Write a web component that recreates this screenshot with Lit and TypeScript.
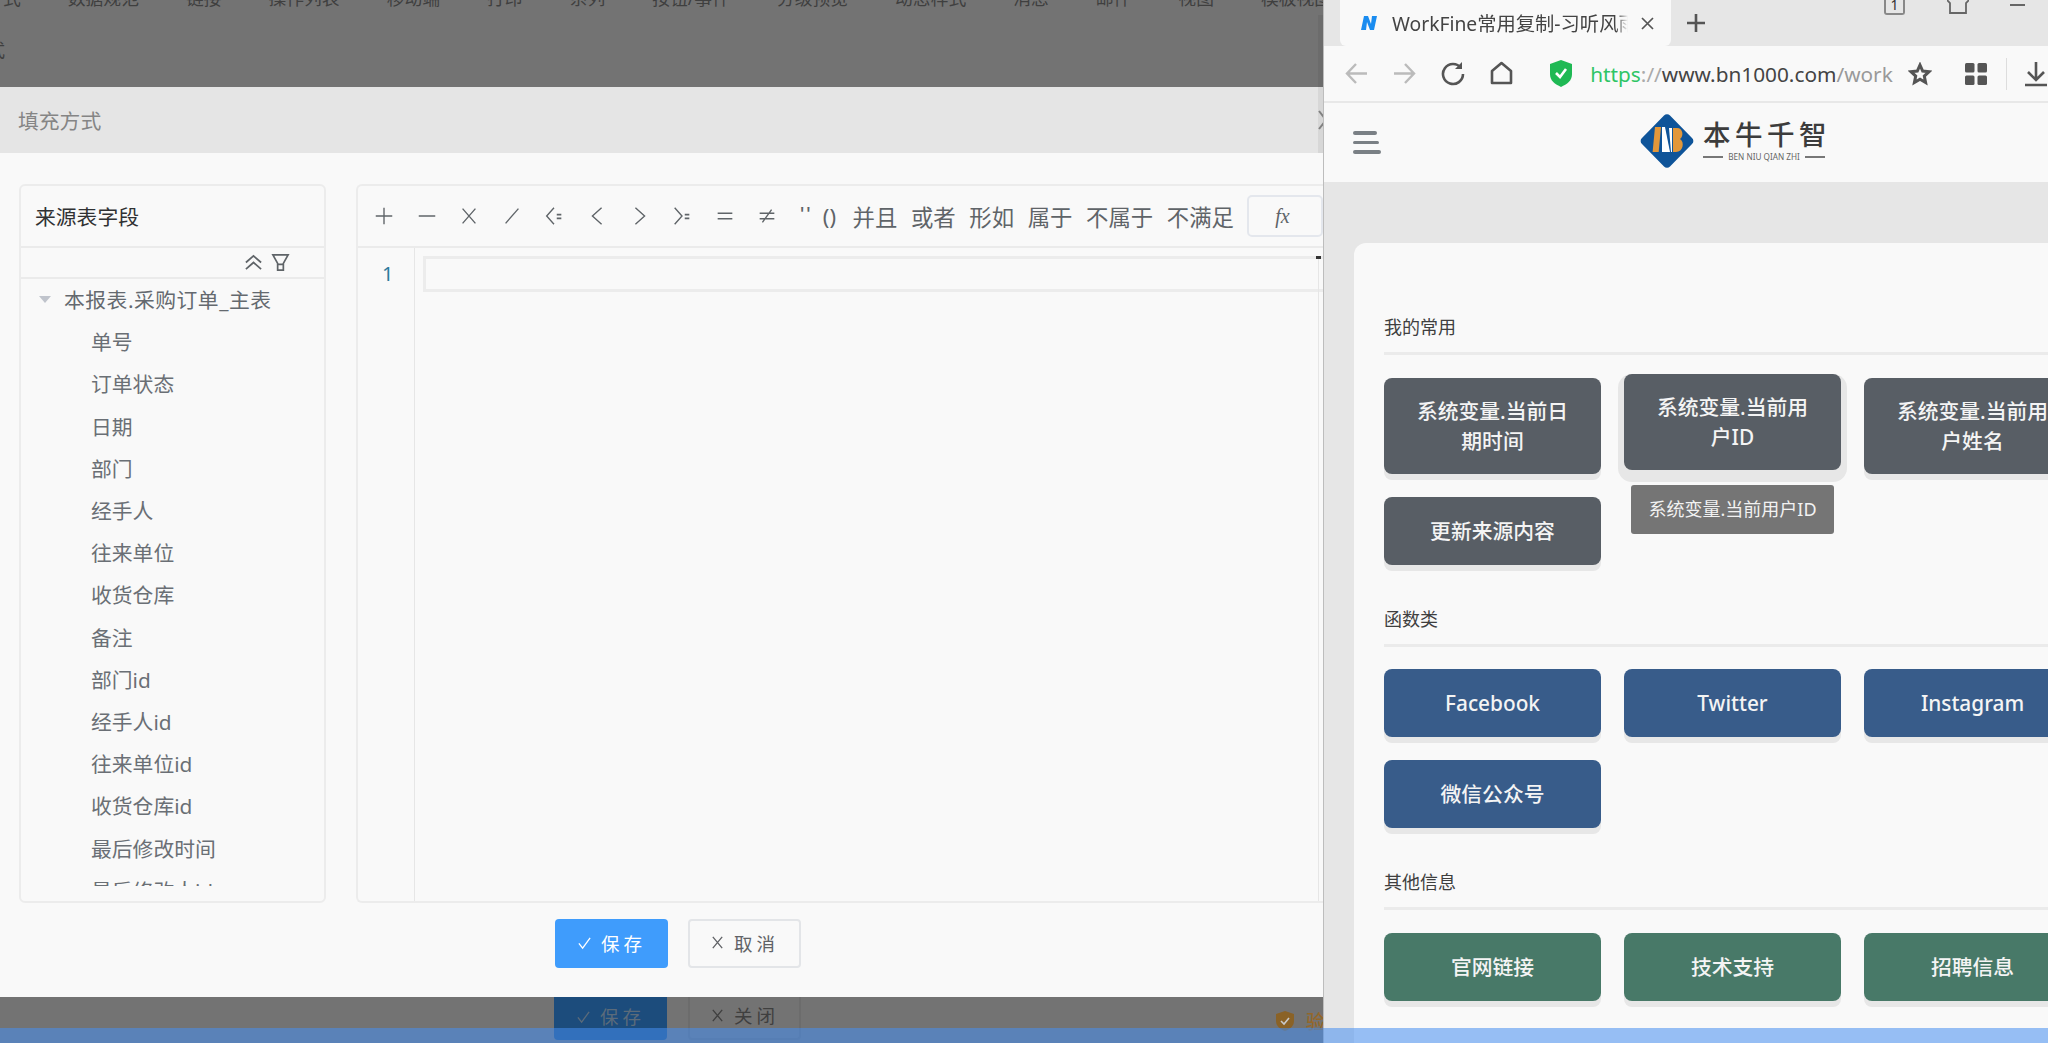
import { LitElement, html, css, svg } from "lit";
import { customElement } from "lit/decorators.js";

const BACK_TABS = ["式", "数据规范", "链接", "操作列表", "移动端", "打印", "系列", "按钮/事件", "分级预览", "动态样式", "消息", "邮件", "视图", "模板视图"];
const FIELDS = ["单号", "订单状态", "日期", "部门", "经手人", "往来单位", "收货仓库", "备注", "部门id", "经手人id", "往来单位id", "收货仓库id", "最后修改时间", "最后修改人id"];
const OPS = ["+", "−", "×", "/", "<=", "<", ">", ">=", "=", "≠"];
const WORD_OPS = ["并且", "或者", "形如", "属于", "不属于", "不满足"];

const opIcon = (op: string) => {
  const l = (d: string) => svg`<path d=${d}></path>`;
  const small = svg`<path d="M15 10.500h5M15 14.500h5" stroke-width="2"></path>`;
  const shapes: Record<string, unknown> = {
    "+": l("M3 12h18M12 3v18"),
    "−": l("M3 12h18"),
    "×": l("M5 4l14 16M19 4L5 20"),
    "/": l("M5 20L19 4"),
    "<=": svg`${l("M12 3L4 12l8 9")}${small}`,
    "<": l("M17 3L7 12l10 9"),
    ">": l("M7 3l10 9-10 9"),
    ">=": svg`${l("M4 3l8 9-8 9")}${small}`,
    "=": l("M4 9h16M4 15h16"),
    "≠": l("M4 9h16M4 15h16M17 5L7 19"),
  };
  return html`<svg class="op" viewBox="0 0 24 24">${shapes[op]}</svg>`;
};

@customElement("app-root")
export class AppRoot extends LitElement {
  static styles = css`
    :host {
      display: block;
      position: relative;
      width: 2048px;
      height: 1043px;
      overflow: hidden;
      font-family: "Noto Sans", "Noto Sans CJK SC", sans-serif;
      background: #f9f9f9;
    }
    * { box-sizing: border-box; }
    .screen { display: flex; height: 1043px; }

    /* left window behind the browser */
    .left { width: 1323px; flex: none; display: flex; flex-direction: column; overflow: hidden; background: #737373; position: relative; }
    .scroll-strip { position: absolute; right: 0; top: 15px; width: 5px; height: 138px; background: rgba(0, 0, 0, 0.06); }
    .backdrop { height: 87px; flex: none; position: relative; overflow: hidden; }
    .back-tabs { display: flex; gap: 47px; margin: -14px 0 0 3px; font-size: 17.8px; line-height: 24px; color: #3f3f3f; white-space: nowrap; }
    .stray { position: absolute; left: -13px; top: 36px; font-size: 18px; color: #3f3f3f; }
    .modal { flex: none; height: 910px; display: flex; flex-direction: column; background: #f9f9f9; }
    .modal-head { height: 66px; flex: none; display: flex; align-items: center; justify-content: space-between; padding: 0 0 0 18px; background: #e5e5e5; font-size: 20.8px; color: #858585; overflow: hidden; }
    .modal-close { width: 16px; height: 24px; margin-right: -11px; fill: none; stroke: #8a8a8a; stroke-width: 2; }
    .modal-body { display: grid; grid-template-columns: 307px 1fr; gap: 30px; padding: 31px 0 0 19px; height: 750px; }
    .panel { border: 2px solid #ececec; border-radius: 6px; height: 719px; overflow: hidden; }
    .fields { display: flex; flex-direction: column; }
    .fields-title { height: 62px; flex: none; display: flex; align-items: center; padding-left: 14px; font-size: 20.8px; color: #303133; border-bottom: 2px solid #ebebeb; }
    .fields-tools { height: 31px; flex: none; display: flex; justify-content: flex-end; align-items: center; gap: 8px; padding-right: 34px; border-bottom: 2px solid #ebebeb; }
    .fields-tools svg { width: 19px; height: 19px; fill: none; stroke: #5f6468; stroke-width: 1.8; }
    .tree { height: 607px; overflow: hidden; color: #6a6f75; font-size: 20.8px; }
    .tree-root { height: 42.2px; margin-top: -1px; display: flex; align-items: center; padding-left: 18px; letter-spacing: 0.5px; color: #64696f; }
    .caret { width: 0; height: 0; margin-right: 13px; border-left: 6px solid transparent; border-right: 6px solid transparent; border-top: 7px solid #c0c4cc; }
    .tree-item { height: 42.2px; display: flex; align-items: center; padding-left: 70px; }

    .editor { display: flex; flex-direction: column; border-right: none; border-radius: 6px 0 0 6px; }
    .toolbar { height: 62px; flex: none; display: flex; align-items: center; padding-left: 15px; border-bottom: 2px solid #ebebeb; white-space: nowrap; color: #5f6468; font-size: 22.4px; }
    .op { width: 22px; height: 22px; margin-right: 20.6px; flex: none; fill: none; stroke: #5f6468; stroke-width: 1.5; }
    .quote { margin: -2px 0 0 1px; width: 16px; font-family: "Liberation Sans", sans-serif; letter-spacing: 2px; }
    .paren { width: 20px; margin-left: 10px; font-size: 22px; }
    .word { margin-left: 13.6px; }
    .fx { width: 76px; height: 42px; margin-left: 13px; padding-right: 5px; flex: none; border: 2px solid #e4e7ed; border-radius: 5px; display: flex; align-items: center; justify-content: center; font: italic 20px "Liberation Serif", serif; color: #5f6468; }
    .code { flex: 1; display: flex; }
    .gutter { width: 57px; flex: none; border-right: 1px solid #e6e6e6; padding: 11px 0 0 24px; font-size: 20px; line-height: 30px; color: #2b7a9c; }
    .code-line { flex: 1; padding: 8px 0 0 8px; position: relative; }
    .active-line { height: 36px; border: 3px solid #ececec; border-right: none; }
    .cursor { position: absolute; right: 2px; top: 8px; width: 5px; height: 3px; background: #333; }
    .cursor-rule { position: absolute; right: 4px; top: 8px; bottom: 0; width: 1px; background: #e6e6e6; }
    .modal-foot { display: flex; gap: 20px; padding: 16px 0 0 555px; }
    .btn { width: 113px; height: 49px; padding-bottom: 2px; display: flex; align-items: center; justify-content: center; gap: 9px; border-radius: 4px; font-size: 18.5px; letter-spacing: 4px; }
    .btn svg { width: 15px; height: 15px; fill: none; stroke: currentColor; stroke-width: 1.4; }
    .primary { background: #3f9cfc; color: #fff; }
    .plain { border: 2px solid #e3e5e8; color: #606266; }

    .behind { flex: 1; display: flex; gap: 21px; padding-left: 554px; position: relative; }
    .behind .btn { height: 43px; padding-bottom: 5px; border-radius: 0 0 4px 4px; }
    .behind .primary { background: #1c4c7c; color: #5b6b7a; }
    .behind .plain { border: 2px solid #6c6c6c; border-top: none; color: #3f3f3f; }
    .verify { position: absolute; left: 1276px; top: 10px; display: flex; align-items: center; gap: 12px; color: #94672a; font-size: 19px; font-weight: 500; white-space: nowrap; }
    .verify svg { width: 18px; height: 20px; flex: none; }

    /* browser */
    .browser { flex: 1; min-width: 0; display: flex; flex-direction: column; border-left: 1px solid #bdbdbd; overflow: hidden; background: #e6e6e6; }
    .tabs { height: 46px; flex: none; display: flex; align-items: flex-end; padding-left: 16px; background: #e6e6e6; position: relative; }
    .tab { width: 331px; height: 46px; flex: none; display: flex; align-items: center; padding-left: 21px; background: #f9f9f9; border-radius: 0 0 6px 6px; font-size: 19.3px; color: #444; white-space: nowrap; }
    .tab svg.fav { width: 17px; height: 16px; margin-right: 14px; flex: none; }
    .tab-name { width: 236px; overflow: hidden; -webkit-mask-image: linear-gradient(90deg, #000 95%, transparent); mask-image: linear-gradient(90deg, #000 95%, transparent); }
    .tab-x { width: 15px; height: 15px; margin-left: 12px; fill: none; stroke: #555; stroke-width: 1.7; }
    .tab-add { width: 20px; height: 20px; margin: 0 0 13px 15px; fill: none; stroke: #555; stroke-width: 2.6; }
    .win { position: absolute; top: 0; height: 20px; }
    .win-count { left: 560px; width: 21px; height: 16px; top: -1px; border: 2px solid #888; border-top: none; border-radius: 0 0 3px 3px; font-size: 14px; line-height: 11px; text-align: center; color: #333; }
    .win-shirt { left: 623px; width: 22px; height: 14px; fill: none; stroke: #666; stroke-width: 1.8; }
    .win-min { left: 686px; top: 4px; width: 15px; height: 2px; background: #666; }
    .address { height: 57px; flex: none; display: flex; align-items: center; background: #f9f9f9; border-bottom: 2px solid #e8e8e8; padding-left: 20px; position: relative; }
    .address svg { flex: none; }
    .nav { width: 25px; height: 25px; margin-right: 23.3px; fill: none; stroke-width: 2.6; stroke: #555; }
    .nav.off { stroke: #bbb; stroke-width: 2.4; }
    .shield { width: 22px; height: 27px; margin: 0 18px 0 13px; }
    .url { width: 303px; overflow: hidden; white-space: nowrap; font-size: 20.8px; color: #444; flex: none; }
    .url .g { color: #2fc565; }
    .url .s { color: #aaa; }
    .url .m { color: #999; }
    .nav-star { width: 24px; height: 24px; margin: 0 0 0 15px; fill: none; stroke: #555; stroke-width: 3; }
    .nav-grid { width: 22px; height: 22px; margin-left: 33px; fill: #555; }
    .nav-sep { width: 1px; height: 32px; background: #ddd; margin-left: 19px; flex: none; }
    .nav-dl { width: 24px; height: 26px; margin-left: 17px; fill: none; stroke: #555; stroke-width: 2.6; }
    .site-head { height: 79px; flex: none; display: flex; align-items: center; background: #f9f9f9; position: relative; padding-left: 29px; }
    .burger { width: 28px; display: flex; flex-direction: column; gap: 6px; }
    .burger i { display: block; height: 3.5px; background: #7a8085; border-radius: 2px; }
    .burger i:first-child { width: 24px; }
    .burger i:nth-child(2) { width: 26px; }
    .logo { display: flex; align-items: center; margin: -3px 0 0 258px; gap: 8px; }
    .logo svg { width: 56px; height: 56px; flex: none; }
    .brand { display: flex; flex-direction: column; width: 122px; margin-top: -2px; }
    .brand-name { font-size: 27.5px; line-height: 32px; letter-spacing: 4.500px; color: #3c3c3c; white-space: nowrap; font-weight: 500; }
    .brand-sub { display: flex; align-items: center; gap: 5px; font-size: 8.2px; line-height: 10px; color: #666; white-space: nowrap; margin-top: 1px; }
    .brand-sub i { flex: 1; height: 2px; background: #777; }
    .page { flex: 1; padding: 61px 0 0 30px; background: #e6e6e6; overflow: hidden; }
    .card { background: #f9f9f9; border-radius: 12px 0 0 0; width: 800px; padding: 72px 0 0 30px; height: 900px; }
    .sec-title { font-size: 18px; line-height: 24px; color: #3f3f3f; height: 24px; }
    .sec-rule { height: 3px; background: #ebebeb; margin-top: 13px; }
    .grid { display: grid; grid-template-columns: repeat(3, 217px); gap: 23px; padding-top: 22.500px; margin-bottom: 42px; }
    .tile { min-height: 68px; padding: 18px 24px; display: flex; align-items: center; justify-content: center; text-align: center; border-radius: 8px; font-size: 20.8px; line-height: 30px; font-weight: 500; color: #f4f4f4; box-shadow: 0 6px 0 #e7e7e7; position: relative; }
    .tile.gray { background: #585e65; }
    .tile.blue { background: #385c8a; }
    .tile.green { background: #487968; }
    .tile.hover { transform: translateY(-4px); box-shadow: 0 6px 0 6px #e7e7e7; }
    .tip { position: absolute; left: 7px; right: 7px; top: 111px; height: 49px; border-radius: 3px; background: #757575; font-size: 18px; line-height: 49px; font-weight: 400; color: #f2f2f2; white-space: nowrap; }
    .taskbar { position: absolute; left: 0; right: 0; bottom: 0; height: 15px; background: rgba(70, 142, 240, 0.55); }
  `;

  private renderLogo() {
    return html`<svg viewBox="0 0 56 56">
      <path d="M25 2.500a4 4 0 0 1 6 0L53 25a4 4 0 0 1 0 6L31 53.500a4 4 0 0 1-6 0L3 31a4 4 0 0 1 0-6z" fill="#0f5499"></path>
      <path d="M16 14h6l-2.300 25H13.600z" fill="#e2973a"></path>
      <path d="M23 14h3l5 25h-8z" fill="#fff"></path>
      <path d="M30 15h3v24h-1z" fill="#fff"></path>
      <path d="M34 15h4c6 0 7 8 3 11 5 3 3 13-4 13h-3z" fill="#e2973a"></path>
    </svg>`;
  }

  render() {
    return html`
      <div class="screen">
        <div class="left">
          <div class="backdrop">
            <div class="back-tabs">${BACK_TABS.map((t) => html`<span>${t}</span>`)}</div>
            <span class="stray">式</span>
          </div>
          <div class="modal">
            <div class="modal-head">
              <span>填充方式</span>
              <svg class="modal-close" viewBox="0 0 16 24"><path d="M1 3l14 18M15 3L1 21"></path></svg>
            </div>
            <div class="modal-body">
              <div class="panel fields">
                <div class="fields-title">来源表字段</div>
                <div class="fields-tools">
                  <svg viewBox="0 0 20 20"><path d="M2 10l8-7 8 7M2 17l8-7 8 7"></path></svg>
                  <svg viewBox="0 0 20 20"><path d="M2 2h16l-5 9v7H7v-7zM7 12h6"></path></svg>
                </div>
                <div class="tree">
                  <div class="tree-root"><i class="caret"></i>本报表.采购订单_主表</div>
                  ${FIELDS.map((f) => html`<div class="tree-item">${f}</div>`)}
                </div>
              </div>
              <div class="panel editor">
                <div class="toolbar">
                  ${OPS.map(opIcon)}
                  <span class="quote">''</span><span class="paren">()</span>
                  ${WORD_OPS.map((w) => html`<span class="word">${w}</span>`)}
                  <span class="fx">fx</span>
                </div>
                <div class="code">
                  <div class="gutter">1</div>
                  <div class="code-line">
                    <div class="active-line"></div>
                    <i class="cursor-rule"></i><i class="cursor"></i>
                  </div>
                </div>
              </div>
            </div>
            <div class="modal-foot">
              <div class="btn primary"><svg viewBox="0 0 16 16"><path d="M2 9l4 5 8-11"></path></svg>保存</div>
              <div class="btn plain"><svg viewBox="0 0 16 16"><path d="M3 2l10 12M13 2L3 14"></path></svg>取消</div>
            </div>
          </div>
          <div class="behind">
            <div class="btn primary"><svg viewBox="0 0 16 16"><path d="M2 9l4 5 8-11"></path></svg>保存</div>
            <div class="btn plain"><svg viewBox="0 0 16 16"><path d="M3 2l10 12M13 2L3 14"></path></svg>关闭</div>
            <div class="verify">
              <svg viewBox="0 0 18 20"><path d="M9 0l9 3v7c0 5-4 8-9 10-5-2-9-5-9-10V3z" fill="#8a6226"></path><path d="M5 10l3 3 5-6" fill="none" stroke="#c9c9c9" stroke-width="1.6"></path></svg>
              <span>验证</span>
            </div>
          </div>
          <i class="scroll-strip"></i>
        </div>

        <div class="browser">
          <div class="tabs">
            <div class="tab">
              <svg class="fav" viewBox="0 0 17 16"><path d="M3 1h4l3 8 1-8h5l-3 14H9L6 7l-1 8H0z" fill="#1a8cf0"></path></svg>
              <span class="tab-name">WorkFine常用复制-习听风雨</span>
              <svg class="tab-x" viewBox="0 0 15 15"><path d="M2 2l11 11M13 2L2 13"></path></svg>
            </div>
            <svg class="tab-add" viewBox="0 0 20 20"><path d="M10 1v18M1 10h18"></path></svg>
            <span class="win win-count">1</span>
            <svg class="win win-shirt" viewBox="0 0 22 14"><path d="M0 0l3 3v10h16V3l3-3"></path></svg>
            <span class="win win-min"></span>
          </div>
          <div class="address">
            <svg class="nav off" viewBox="0 0 25 25"><path d="M23 12.500H3M12 3l-9 9.500 9 9.500"></path></svg>
            <svg class="nav off" viewBox="0 0 25 25"><path d="M2 12.500h20M13 3l9 9.500-9 9.500"></path></svg>
            <svg class="nav" viewBox="0 0 25 25"><path d="M20 7a10 10 0 1 0 2 6"></path><path d="M21 1v7h-7" fill="#555" stroke="none"></path></svg>
            <svg class="nav" viewBox="0 0 25 25"><path d="M3 22V10l9.500-8L22 10v12z" stroke-linejoin="round"></path></svg>
            <svg class="shield" viewBox="0 0 22 27"><path d="M11 0l11 4v10c0 7-5 10-11 13C5 24 0 21 0 14V4z" fill="#1fb954"></path><path d="M6 13l4 4 6-8" fill="none" stroke="#fff" stroke-width="2.6"></path></svg>
            <div class="url"><span class="g">https</span><span class="s">://</span>www.bn1000.com<span class="m">/workfine</span></div>
            <svg class="nav-star" viewBox="0 0 24 24"><path d="M12 3l2.700 6 6.300.7-4.700 4.400 1.300 6.500L12 17.300l-5.600 3.300 1.300-6.500L3 9.700 9.300 9z"></path></svg>
            <svg class="nav-grid" viewBox="0 0 22 22"><rect width="9.500" height="9.500" rx="1.500"></rect><rect x="12.500" width="9.500" height="9.500" rx="1.500"></rect><rect y="12.500" width="9.500" height="9.500" rx="1.500"></rect><rect x="12.500" y="12.500" width="9.500" height="9.500" rx="1.500"></rect></svg>
            <i class="nav-sep"></i>
            <svg class="nav-dl" viewBox="0 0 24 26"><path d="M12 1v17M4 11l8 8 8-8M1 24h22"></path></svg>
          </div>
          <div class="site-head">
            <div class="burger"><i></i><i></i><i></i></div>
            <div class="logo">
              ${this.renderLogo()}
              <div class="brand">
                <span class="brand-name">本牛千智</span>
                <span class="brand-sub"><i></i>BEN NIU QIAN ZHI<i></i></span>
              </div>
            </div>
          </div>
          <div class="page">
            <div class="card">
              <div class="sec-title">我的常用</div>
              <div class="sec-rule"></div>
              <div class="grid">
                <div class="tile gray">系统变量.当前日期时间</div>
                <div class="tile gray hover">系统变量.当前用户ID<div class="tip">系统变量.当前用户ID</div></div>
                <div class="tile gray">系统变量.当前用户姓名</div>
                <div class="tile gray">更新来源内容</div>
              </div>
              <div class="sec-title">函数类</div>
              <div class="sec-rule"></div>
              <div class="grid">
                <div class="tile blue">Facebook</div>
                <div class="tile blue">Twitter</div>
                <div class="tile blue">Instagram</div>
                <div class="tile blue">微信公众号</div>
              </div>
              <div class="sec-title">其他信息</div>
              <div class="sec-rule"></div>
              <div class="grid">
                <div class="tile green">官网链接</div>
                <div class="tile green">技术支持</div>
                <div class="tile green">招聘信息</div>
              </div>
            </div>
          </div>
        </div>
      </div>
      <div class="taskbar"></div>
    `;
  }
}
